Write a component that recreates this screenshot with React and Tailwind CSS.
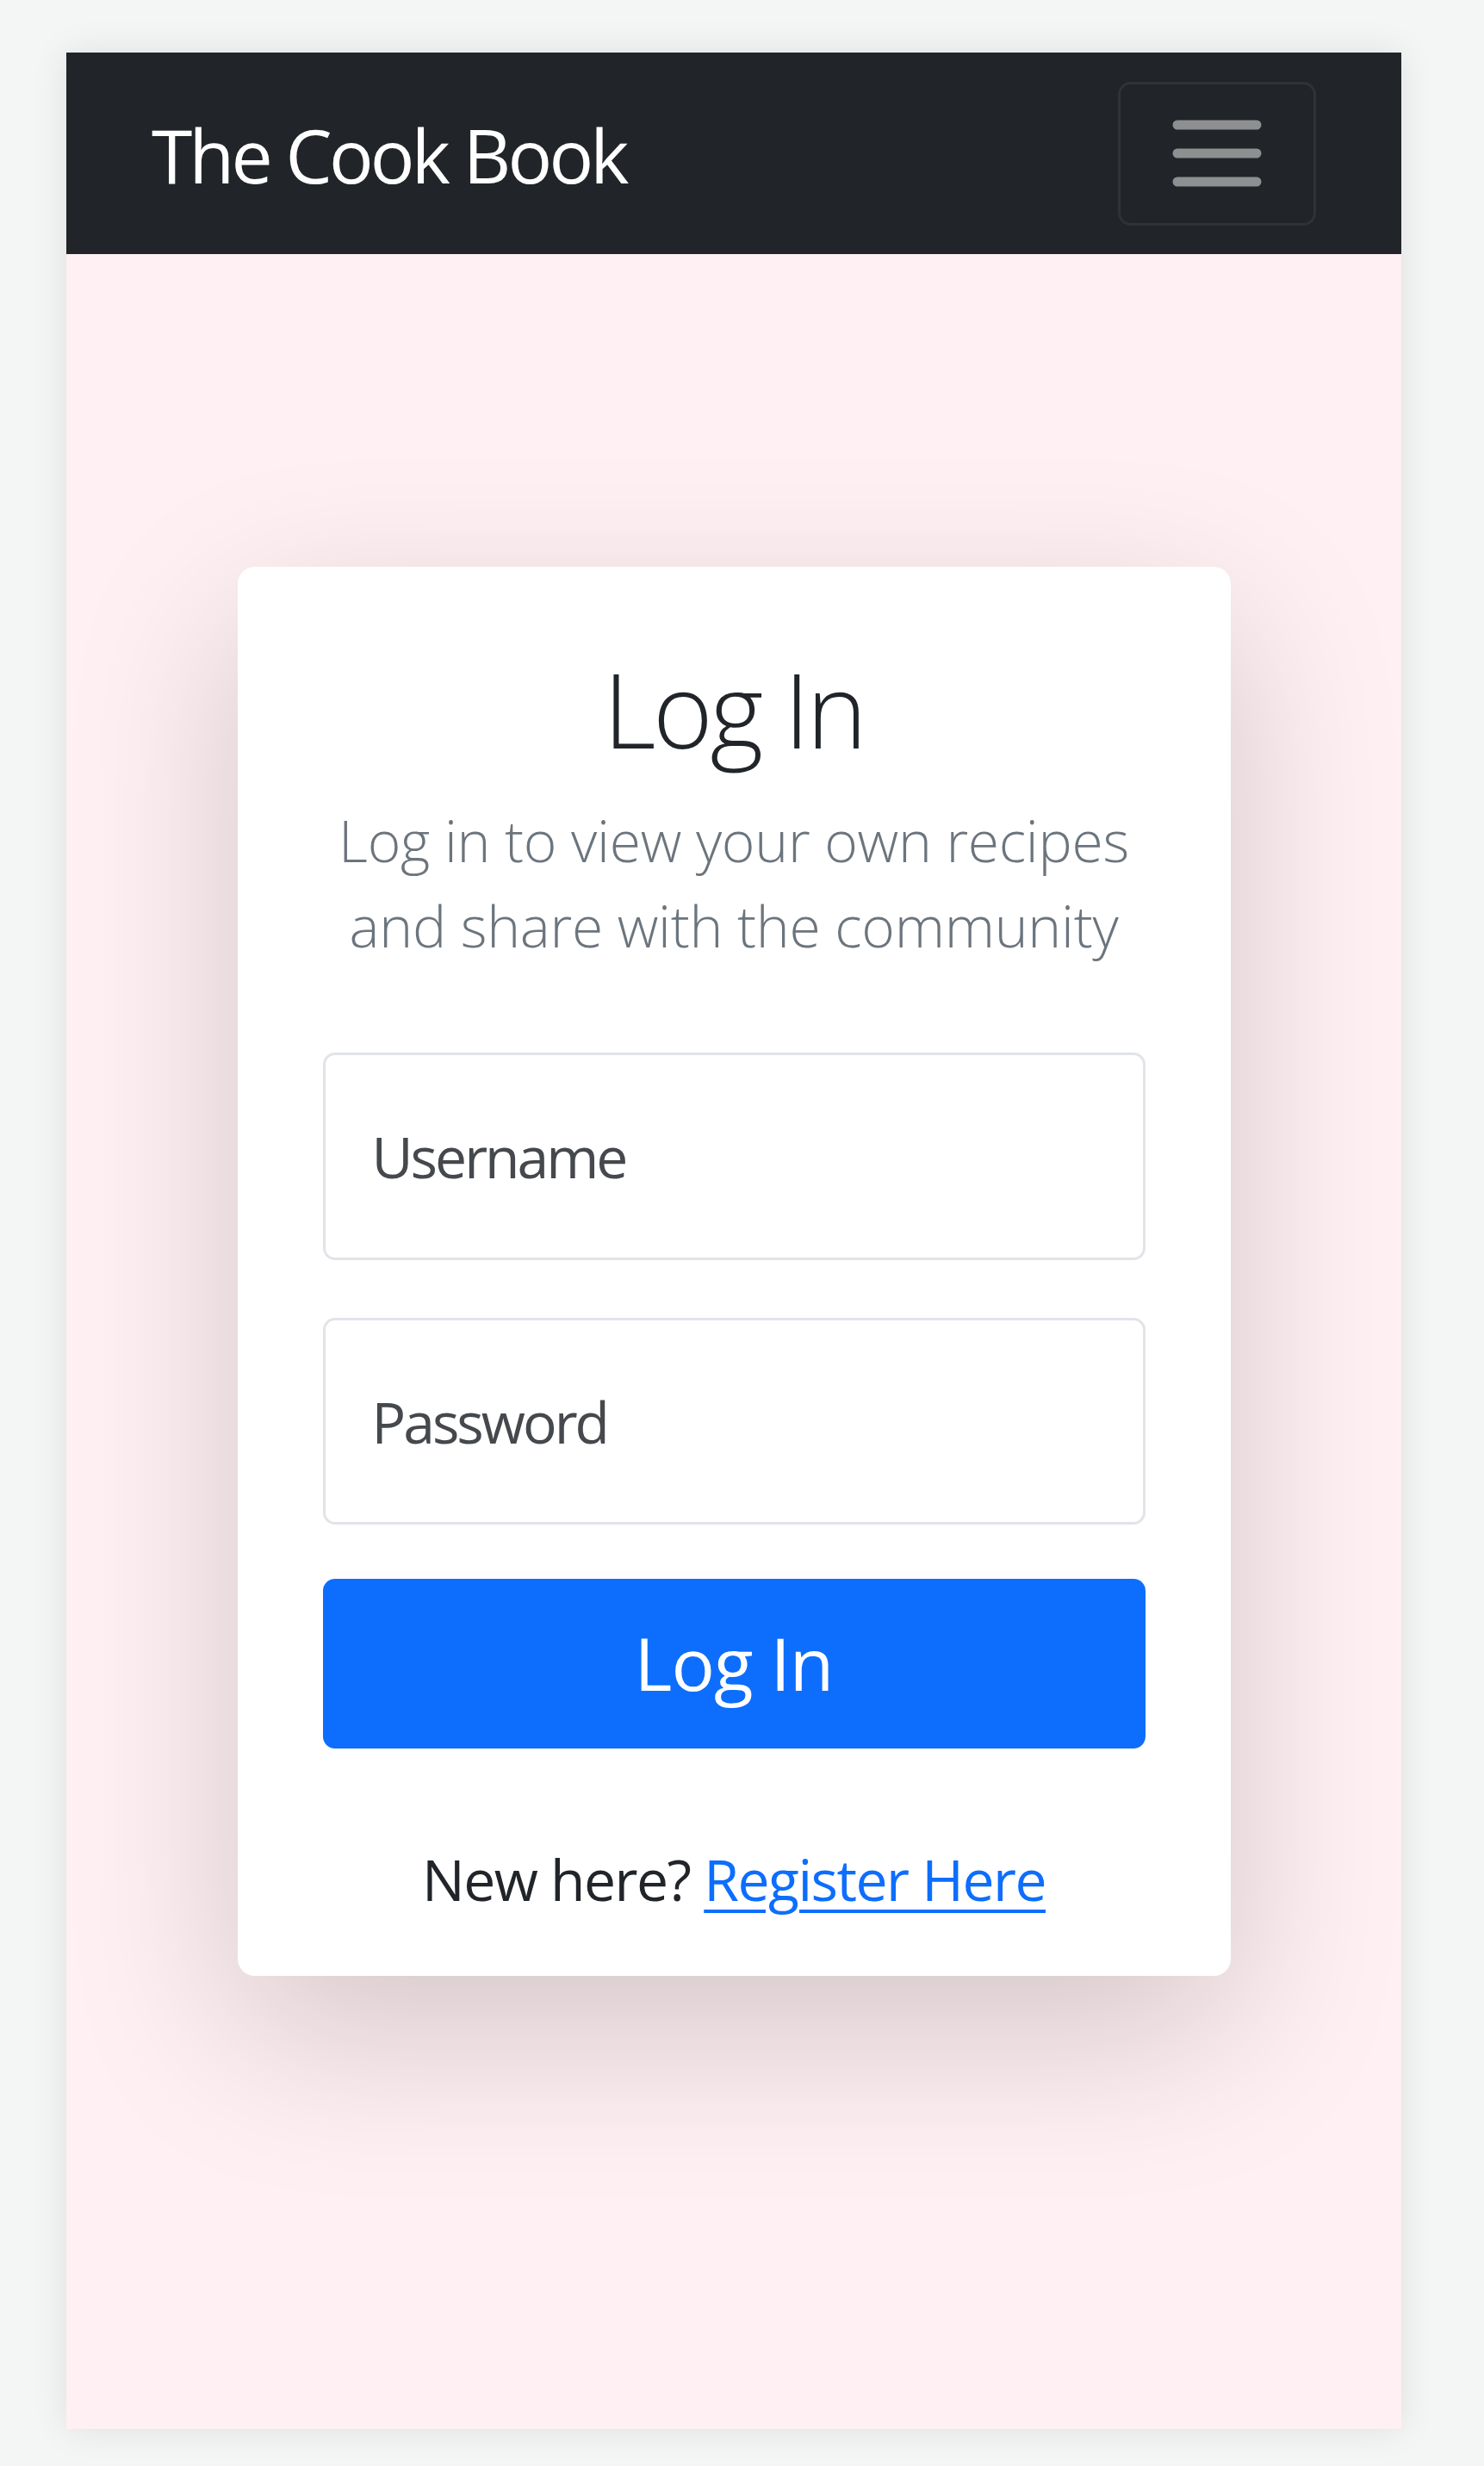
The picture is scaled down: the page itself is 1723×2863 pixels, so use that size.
export default function App() {
  return (
    <div
      className="min-h-[2863px] w-full bg-[#f4f5f5] pt-[61px] pl-[77px]"
      style={{ fontFamily: '"Open Sans", "Noto Sans", sans-serif' }}
    >
      <div className="flex h-[2759px] w-[1550px] flex-col bg-[#fff0f3] shadow-[0_0_40px_rgba(0,0,0,0.09)]">
        <nav className="flex h-[234px] shrink-0 items-center justify-between bg-[#212529] px-[99px]">
          <span className="pt-[4px] text-[86px] leading-none tracking-[-3.8px] text-white">The Cook Book</span>
          <button className="flex h-[167px] w-[230px] items-center justify-center rounded-[15px] border-[3px] border-[#2f3337]">
            <svg width="104" height="78" viewBox="0 0 104 78">
              <g stroke="#8e8f91" strokeWidth="11" strokeLinecap="round">
                <line x1="6" y1="6" x2="98" y2="6" />
                <line x1="6" y1="39" x2="98" y2="39" />
                <line x1="6" y1="72" x2="98" y2="72" />
              </g>
            </svg>
          </button>
        </nav>
        <main className="flex flex-1 justify-center pt-[363px]">
          <div className="flex h-[1636px] w-[1153px] flex-col items-stretch rounded-[20px] bg-white px-[99px] pt-[94px] shadow-[0_66px_199px_rgba(0,0,0,0.175)]">
            <h1 className="text-center text-[119px] font-light leading-[1.2] tracking-[-3.5px] text-[#212529]">Log In</h1>
            <p className="mt-[31px] text-center text-[66px] font-light leading-[99px] tracking-[-0.3px] text-[#6c757d]">
              Log in to view your own recipes
              <br />
              and share with the community
            </p>
            <input
              type="text"
              placeholder="Username"
              className="mt-[98px] h-[241px] w-full rounded-[14px] border-[3px] border-[#e1e4e8] bg-white pl-[54px] text-[66px] tracking-[-3px] text-[#212529] outline-none placeholder:text-[#45484c]"
            />
            <input
              type="password"
              placeholder="Password"
              className="mt-[67px] h-[240px] w-full rounded-[14px] border-[3px] border-[#e1e4e8] bg-white pl-[54px] text-[66px] tracking-[-3px] text-[#212529] outline-none placeholder:text-[#45484c]"
            />
            <button className="mt-[63px] flex h-[197px] w-full items-center justify-center rounded-[14px] bg-[#0d6efd] text-[84px] leading-none tracking-[-1px] text-white">
              Log In
            </button>
            <p className="mt-[102px] text-center text-[66px] leading-[99px] tracking-[-1.5px] text-[#212529]">
              New here?{" "}
              <a href="#" className="text-[#0d6efd] underline decoration-[4px] underline-offset-[10px]">
                Register Here
              </a>
            </p>
          </div>
        </main>
      </div>
    </div>
  );
}
